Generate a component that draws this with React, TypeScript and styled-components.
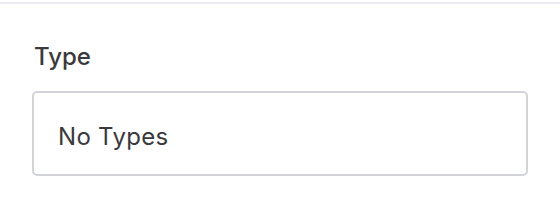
import React from "react"
import styled, { createGlobalStyle } from "styled-components"

const GlobalStyle = createGlobalStyle`
  html, body {
    margin: 0;
    padding: 0;
    background: #ffffff;
  }
  body {
    font-family: Inter, "Liberation Sans", Arial, sans-serif;
  }
`

const Panel = styled.div`
  width: 560px;
  height: 208px;
  box-sizing: border-box;
  padding-top: 2px;
`

const Divider = styled.div`
  height: 2px;
  background: #ecebf2;
`

const Field = styled.div`
  display: flex;
  flex-direction: column;
  padding: 37px 32px 0 32px;
`

const Label = styled.label`
  font-size: 24px;
  font-weight: 500;
  line-height: 32px;
  color: #3a3a3c;
  padding-left: 2px;
  margin-bottom: 18px;
`

const Box = styled.div`
  height: 85px;
  width: 496px;
  box-sizing: border-box;
  border: 2px solid #d2d4d8;
  border-radius: 5px;
  display: flex;
  align-items: center;
  padding: 6px 24px 0 24px;
  font-size: 24px;
  letter-spacing: 0.3px;
  color: #3a3a3c;
`

export default function App() {
  return (
    <>
      <GlobalStyle />
      <Panel>
        <Divider />
        <Field>
          <Label>Type</Label>
          <Box>No Types</Box>
        </Field>
      </Panel>
    </>
  )
}
